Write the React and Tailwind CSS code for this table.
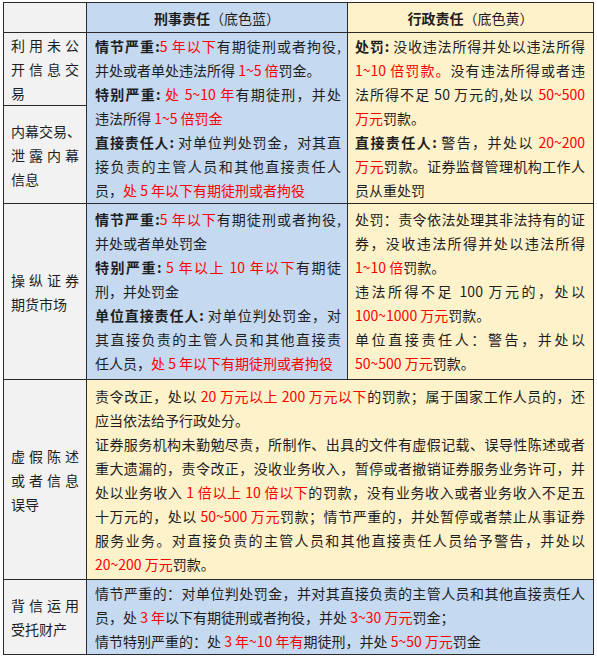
import clsx from "clsx";

const R = ({ children }) => <span className="text-[#ff0000]">{children}</span>;
const B = ({ children }) => <span className="font-bold">{children}</span>;

// one printed line; j = line was wrapped in the source, so it is spread to full width
function Line({ j, children }) {
  return (
    <div
      className={clsx(
        "whitespace-nowrap",
        j && "text-justify [text-align-last:justify]"
      )}
    >
      {children}
    </div>
  );
}

function Lines({ items }) {
  return (
    <>
      {items.map((l, i) => (
        <Line key={i} j={l.j}>
          {l.c}
        </Line>
      ))}
    </>
  );
}

const criminalA = [
  { j: true, c: <><B>情节严重:</B><R>5 年以下</R>有期徒刑或者拘役,</> },
  { c: <>并处或者单处违法所得 <R>1~5 倍</R>罚金。</> },
  { j: true, c: <><B>特别严重:</B> <R>处 5~10 年</R>有期徒刑，并处</> },
  { c: <>违法所得 <R>1~5 倍罚金</R></> },
  { j: true, c: <><B>直接责任人:</B> 对单位判处罚金，对其直</> },
  { j: true, c: <>接负责的主管人员和其他直接责任人</> },
  { c: <>员，<R>处 5 年以下有期徒刑或者拘役</R></> },
];

const adminA = [
  { j: true, c: <><B>处罚:</B> 没收违法所得并处以违法所得</> },
  { j: true, c: <><R>1~10 倍罚款。</R>没有违法所得或者违</> },
  { j: true, c: <>法所得不足 50 万元的,处以 <R>50~500</R></> },
  { c: <><R>万元</R>罚款。</> },
  { j: true, c: <><B>直接责任人:</B> 警告，并处以 <R>20~200</R></> },
  { j: true, c: <><R>万元</R>罚款。证券监督管理机构工作人</> },
  { c: <>员从重处罚</> },
];

const criminalB = [
  { j: true, c: <><B>情节严重:</B><R>5 年以下</R>有期徒刑或者拘役,</> },
  { c: <>并处或者单处罚金</> },
  { j: true, c: <><B>特别严重:</B> <R>5 年以上 10 年以下</R>有期徒</> },
  { c: <>刑，并处罚金</> },
  { j: true, c: <><B>单位直接责任人:</B> 对单位判处罚金，对</> },
  { j: true, c: <>其直接负责的主管人员和其他直接责</> },
  { c: <>任人员，<R>处 5 年以下有期徒刑或者拘役</R></> },
];

const adminB = [
  { j: true, c: <>处罚：责令依法处理其非法持有的证</> },
  { j: true, c: <>券，没收违法所得并处以违法所得</> },
  { c: <><R>1~10 倍</R>罚款。</> },
  { j: true, c: <>违法所得不足 100 万元的，处以</> },
  { c: <><R>100~1000 万元</R>罚款。</> },
  { j: true, c: <>单位直接责任人：警告，并处以</> },
  { c: <><R>50~500 万元</R>罚款。</> },
];

const adminC = [
  { j: true, c: <>责令改正，处以 <R>20 万元以上 200 万元以下</R>的罚款；属于国家工作人员的，还</> },
  { c: <>应当依法给予行政处分。</> },
  { j: true, c: <>证券服务机构未勤勉尽责，所制作、出具的文件有虚假记载、误导性陈述或者</> },
  { j: true, c: <>重大遗漏的，责令改正，没收业务收入，暂停或者撤销证券服务业务许可，并</> },
  { j: true, c: <>处以业务收入 <R>1 倍以上 10 倍以下</R>的罚款，没有业务收入或者业务收入不足五</> },
  { j: true, c: <>十万元的，处以 <R>50~500 万元</R>罚款；情节严重的，并处暂停或者禁止从事证券</> },
  { j: true, c: <>服务业务。对直接负责的主管人员和其他直接责任人员给予警告，并处以</> },
  { c: <><R>20~200 万元</R>罚款。</> },
];

const criminalD = [
  { j: true, c: <>情节严重的：对单位判处罚金，并对其直接负责的主管人员和其他直接责任人</> },
  { c: <>员，处 <R>3 年</R>以下有期徒刑或者拘役，并处 <R>3~30 万元</R>罚金；</> },
  { c: <>情节特别严重的：处 <R>3 年~10 年有</R>期徒刑，并处 <R>5~50 万元</R>罚金</> },
];

function Name({ lines }) {
  return (
    <td className="border border-[#2a2a2a] bg-[#f2f2f2] px-[7px] align-middle">
      {lines.map((t, i) => (
        <Line key={i} j={i < lines.length - 1 && t.length < 5}>
          {t}
        </Line>
      ))}
    </td>
  );
}

const cell = "border border-[#2a2a2a] align-top";
const blue = "bg-[#c5d9f1]";
const yellow = "bg-[#fef2cb]";

export default function App() {
  return (
    <div className="bg-white w-[597px] h-[659px] pt-[2px] pl-[3px] text-[14px] leading-[24px] text-[#1e1e1e] [font-family:'Noto_Sans_CJK_SC',sans-serif]">
      <table className="w-[590px] table-fixed border-collapse">
        <colgroup>
          <col className="w-[83px]" />
          <col className="w-[261px]" />
          <col className="w-[246px]" />
        </colgroup>
        <tbody>
          <tr className="h-[30px]">
            <td className="border border-[#2a2a2a] bg-[#f2f2f2]"></td>
            <td className={clsx("border border-[#2a2a2a] text-center", blue)}>
              <span className="font-bold">刑事责任</span>（底色蓝）
            </td>
            <td className={clsx("border border-[#2a2a2a] text-center", yellow)}>
              <span className="font-bold">行政责任</span>（底色黄）
            </td>
          </tr>
          <tr className="h-[71px]">
            <Name lines={["利用未公", "开信息交", "易"]} />
            <td rowSpan={2} className={clsx(cell, blue, "pl-[8px] pr-[6px] py-[1px]")}>
              <Lines items={criminalA} />
            </td>
            <td rowSpan={2} className={clsx(cell, yellow, "pl-[7px] pr-[8px] py-[1px]")}>
              <Lines items={adminA} />
            </td>
          </tr>
          <tr>
            <Name lines={["内幕交易、", "泄露内幕", "信息"]} />
          </tr>
          <tr>
            <Name lines={["操纵证券", "期货市场"]} />
            <td className={clsx(cell, blue, "pl-[8px] pr-[6px] pt-[3px] pb-[4px]")}>
              <Lines items={criminalB} />
            </td>
            <td className={clsx(cell, yellow, "pl-[7px] pr-[8px] pt-[3px] pb-[4px]")}>
              <Lines items={adminB} />
            </td>
          </tr>
          <tr>
            <Name lines={["虚假陈述", "或者信息", "误导"]} />
            <td colSpan={2} className={clsx(cell, yellow, "px-[8px] pt-[4px] pb-[3px]")}>
              <Lines items={adminC} />
            </td>
          </tr>
          <tr>
            <Name lines={["背信运用", "受托财产"]} />
            <td colSpan={2} className={clsx(cell, blue, "px-[8px] py-[1px]")}>
              <Lines items={criminalD} />
            </td>
          </tr>
        </tbody>
      </table>
    </div>
  );
}
